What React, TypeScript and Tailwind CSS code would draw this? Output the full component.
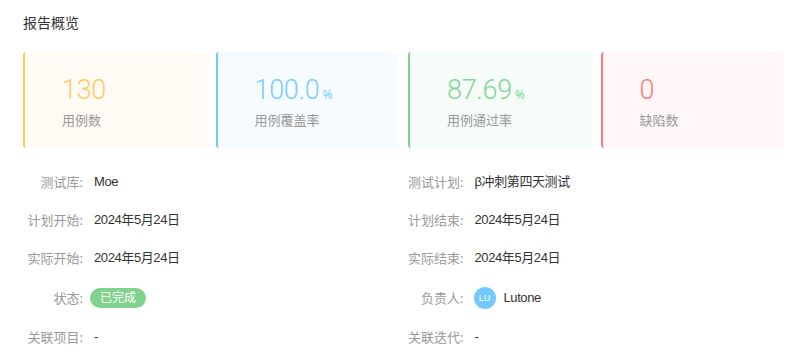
const cards = [
  { value: '130', unit: '', label: '用例数', bg: 'bg-[#fffaf4]', border: 'border-[#ffc95f]', text: 'text-[#ffca6a]' },
  { value: '100.0', unit: '%', label: '用例覆盖率', bg: 'bg-[#f5fbff]', border: 'border-[#72c9ff]', text: 'text-[#7ccdff]' },
  { value: '87.69', unit: '%', label: '用例通过率', bg: 'bg-[#f6fcf7]', border: 'border-[#7dd68f]', text: 'text-[#80d69a]' },
  { value: '0', unit: '', label: '缺陷数', bg: 'bg-[#fff7f7]', border: 'border-[#ff7676]', text: 'text-[#ff7b7b]' },
];

function Row({ label, children, tall }: { label: string; children: React.ReactNode; tall?: boolean }) {
  return (
    <div className={`flex items-center ${tall ? 'h-[41px]' : 'h-[38px]'}`}>
      <div className="w-[60px] shrink-0 text-right text-[#999]">{label}:</div>
      <div
        className="ml-[11px] text-[13px] tracking-[-0.4px] text-[#333]"
        style={{ fontFamily: '"Liberation Sans", "Noto Sans CJK SC", sans-serif' }}
      >
        {children}
      </div>
    </div>
  );
}

export default function App() {
  return (
    <div
      className="w-[795px] h-[354px] bg-white pl-[23px] pr-[11px] text-[13px] leading-5 overflow-hidden"
      style={{ fontFamily: '"Noto Sans", "Noto Sans CJK SC", sans-serif' }}
    >
      <div className="pt-[13px] text-[14px] text-[#333]">报告概览</div>

      <div className="mt-[19px] grid grid-cols-4 gap-[9px]">
        {cards.map((c) => (
          <div
            key={c.label}
            className={`h-[96px] rounded-[3px] border-l-2 ${c.border} ${c.bg} pl-[37px] pt-[22px]`}
          >
            <div className={`flex items-baseline ${c.text}`}>
              <span
                className="text-[27px] leading-[32px] font-light tracking-[-0.3px]"
                style={{ fontFamily: 'Roboto, sans-serif' }}
              >
                {c.value}
              </span>
              {c.unit && <span className="ml-[3px] text-[12px] leading-none">{c.unit}</span>}
            </div>
            <div className="mt-[4px] text-[#999]">{c.label}</div>
          </div>
        ))}
      </div>

      <div className="mt-[15px] grid grid-cols-2">
        <div>
          <Row label="测试库">Moe</Row>
          <Row label="计划开始">2024年5月24日</Row>
          <Row label="实际开始">2024年5月24日</Row>
          <Row label="状态" tall>
            <span className="-ml-[4px] inline-flex h-[20px] w-[56px] items-center justify-center rounded-full bg-[#7fd38f] text-[12px] tracking-normal text-white">
              已完成
            </span>
          </Row>
          <Row label="关联项目">-</Row>
        </div>
        <div>
          <Row label="测试计划">β冲刺第四天测试</Row>
          <Row label="计划结束">2024年5月24日</Row>
          <Row label="实际结束">2024年5月24日</Row>
          <Row label="负责人" tall>
            <span className="-ml-[1px] flex items-center">
              <span className="flex h-[22px] w-[22px] items-center justify-center rounded-full bg-[#72c8ff] text-[9px] tracking-normal text-white">
                LU
              </span>
              <span className="ml-[8px]">Lutone</span>
            </span>
          </Row>
          <Row label="关联迭代">-</Row>
        </div>
      </div>
    </div>
  );
}
